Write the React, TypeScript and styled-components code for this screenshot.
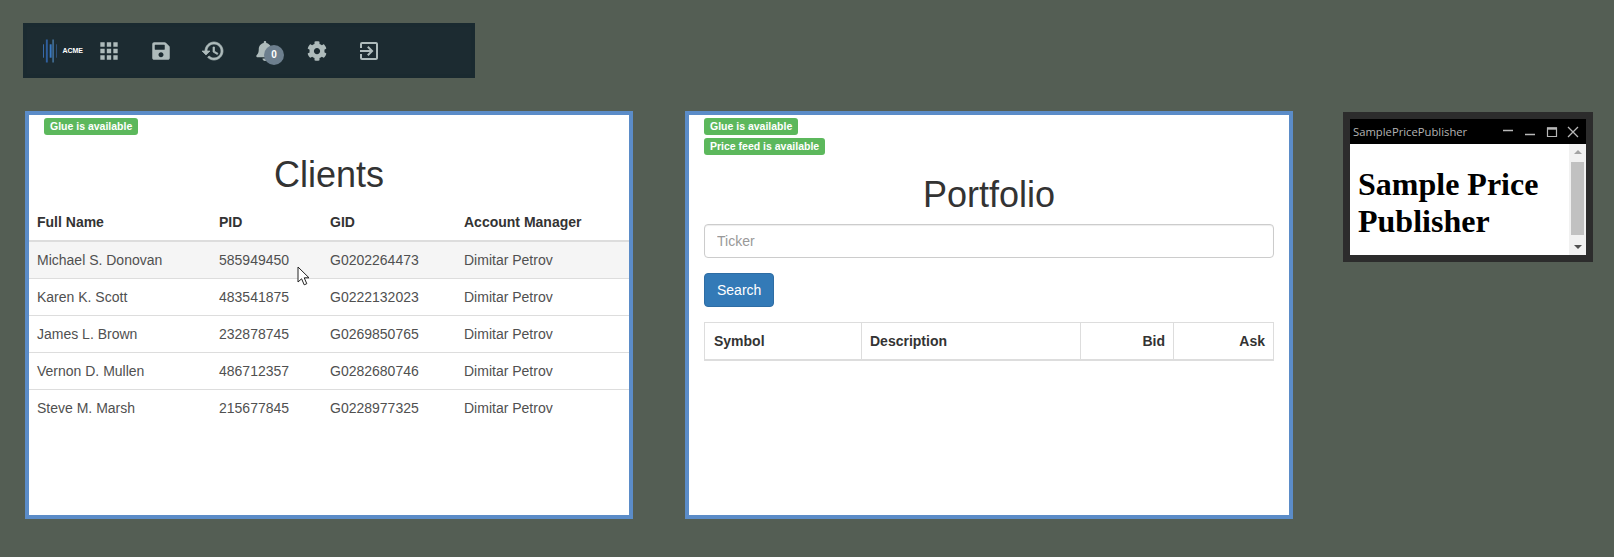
import styled, { createGlobalStyle } from "styled-components";
import { FaBell, FaCog, FaSave } from "react-icons/fa";
import { MdApps, MdOutlineExitToApp } from "react-icons/md";

const GlobalStyle = createGlobalStyle`
  html, body {
    margin: 0;
    padding: 0;
    background: #545e54;
  }
  * {
    box-sizing: border-box;
  }
  body {
    font-family: "Liberation Sans", Arial, sans-serif;
    font-size: 14px;
    line-height: 20px;
    color: #333;
  }
`;

const Page = styled.div`
  width: 1614px;
  height: 557px;
  padding: 23px 0 0 23px;
  overflow: hidden;
`;

const Toolbar = styled.div`
  width: 452px;
  height: 55px;
  display: flex;
  align-items: center;
  background: #1c2b31;
  box-shadow: inset 0 0 0 4px #1a2a30;
`;

const Logo = styled.div`
  width: 60px;
  display: flex;
  align-items: center;
  gap: 5px;
  padding-left: 20px;
  color: #fff;
  font-size: 7px;
  font-weight: bold;
`;

const ToolButton = styled.div`
  position: relative;
  width: 52px;
  height: 55px;
  display: flex;
  align-items: center;
  justify-content: center;
  color: #aebbbb;
`;

const Badge = styled.span`
  position: absolute;
  left: 25px;
  top: 22px;
  width: 20px;
  height: 20px;
  border-radius: 50%;
  background: #6d7f8e;
  color: #fff;
  font-size: 10px;
  font-weight: bold;
  line-height: 20px;
  text-align: center;
`;

const Workspace = styled.div`
  display: flex;
  align-items: flex-start;
  margin: 33px 0 0 2px;
`;

const Panel = styled.div`
  position: relative;
  width: 608px;
  height: 408px;
  margin-right: 52px;
  border: 4px solid #5b8cc8;
  background: #fff;
`;

const Labels = styled.div`
  display: flex;
  flex-direction: column;
  align-items: flex-start;
  gap: 3px;
  padding: 3px 15px 0;
`;

const Label = styled.span`
  height: 17px;
  padding: 0 6px;
  border-radius: 3px;
  background: #5cb85c;
  color: #fff;
  font-size: 10.5px;
  font-weight: bold;
  line-height: 16px;
`;

const Title = styled.h1`
  margin: 19.5px 0 10px;
  font-size: 36px;
  font-weight: 500;
  line-height: 39.6px;
  text-align: center;
`;

const ClientTable = styled.table`
  width: 100%;
  border-collapse: collapse;
  table-layout: fixed;
`;

const Head = styled.th<{ $width?: number }>`
  width: ${(p) => (p.$width ? `${p.$width}px` : "auto")};
  padding: 8px;
  border-bottom: 2px solid #ddd;
  font-weight: bold;
  text-align: left;
`;

const Row = styled.tr<{ $hover?: boolean }>`
  background: ${(p) => (p.$hover ? "#f5f5f5" : "#fff")};
  &:not(:last-child) td {
    border-bottom: 1px solid #ddd;
  }
`;

const Cell = styled.td`
  padding: 8px;
  color: #505050;
`;

const Cursor = styled.svg`
  position: absolute;
  left: 268px;
  top: 151px;
`;

const Form = styled.div`
  padding: 0 15px;
`;

const Input = styled.input`
  display: block;
  width: 100%;
  height: 34px;
  padding: 6px 12px;
  border: 1px solid #ccc;
  border-radius: 4px;
  box-shadow: inset 0 1px 1px rgba(0, 0, 0, 0.075);
  font-family: inherit;
  font-size: 14px;
  &::placeholder {
    color: #999;
  }
`;

const Button = styled.button`
  display: block;
  height: 34px;
  margin: 15px 0;
  padding: 6px 12px;
  border: 1px solid #2e6da4;
  border-radius: 4px;
  background: #337ab7;
  color: #fff;
  font-family: inherit;
  font-size: 14px;
  line-height: 20px;
`;

const PriceTable = styled.table`
  width: 570px;
  border-collapse: separate;
  border-spacing: 0;
  table-layout: fixed;
`;

const PriceHead = styled.th<{ $width: number; $right?: boolean }>`
  width: ${(p) => p.$width}px;
  padding: 8px;
  border: 1px solid #ddd;
  border-left-width: 0;
  border-bottom-width: 2px;
  font-weight: bold;
  text-align: ${(p) => (p.$right ? "right" : "left")};
  &:first-child {
    padding-left: 9px;
    border-left-width: 1px;
  }
`;

const Window = styled.div`
  width: 250px;
  height: 150px;
  margin: 1px 0 0 -2px;
  border: 7px solid #2c2c2c;
  background: #fff;
`;

const TitleBar = styled.div`
  height: 25px;
  display: flex;
  align-items: center;
  justify-content: space-between;
  padding: 0 7px 0 3px;
  background: #000;
  color: #b4b4b4;
  font-family: "Open Sans", sans-serif;
  font-size: 11.25px;
`;

const WindowButtons = styled.svg`
  display: block;
`;

const WindowBody = styled.div`
  height: 111px;
  display: flex;
  overflow: hidden;
`;

const Content = styled.div`
  flex: 1;
  padding-left: 8px;
  overflow: hidden;
`;

const Heading = styled.h1`
  margin: 22px 0;
  color: #000;
  font-family: "Liberation Serif", "Times New Roman", serif;
  font-size: 32px;
  font-weight: bold;
  line-height: 36.8px;
`;

const Scrollbar = styled.div`
  width: 17px;
  display: flex;
  flex-direction: column;
  align-items: center;
  justify-content: space-between;
  padding: 6px 0;
  background: #f1f1f1;
`;

const Arrow = styled.span<{ $down?: boolean }>`
  width: 0;
  height: 0;
  border-left: 4px solid transparent;
  border-right: 4px solid transparent;
  border-bottom: ${(p) => (p.$down ? "0" : "4px solid #a3a3a3")};
  border-top: ${(p) => (p.$down ? "4px solid #505050" : "0")};
`;

const Thumb = styled.div`
  width: 13px;
  height: 73px;
  margin: 0 0 2px;
  background: #c1c1c1;
`;

const clients = [
  ["Michael S. Donovan", "585949450", "G0202264473"],
  ["Karen K. Scott", "483541875", "G0222132023"],
  ["James L. Brown", "232878745", "G0269850765"],
  ["Vernon D. Mullen", "486712357", "G0282680746"],
  ["Steve M. Marsh", "215677845", "G0228977325"],
];

const LogoMark = () => (
  <svg width="15" height="24" viewBox="0 0 15 24">
    <rect x="0" y="5" width="1" height="14" fill="#3a6cae" />
    <rect x="3" y="0" width="2" height="24" fill="#2f5f9e" />
    <rect x="7" y="5" width="2" height="14" fill="#3a7ac4" />
    <rect x="10" y="0" width="1" height="24" fill="#5d9ddc" />
    <rect x="14" y="5" width="1" height="14" fill="#3a6cae" />
  </svg>
);

// material history, drawn here so it can carry the heavier stroke of the toolbar
const HistoryIcon = () => (
  <svg width="24" height="24" viewBox="0 0 24 24" fill="currentColor" stroke="currentColor" strokeWidth="0.7">
    <path d="M13 3c-4.97 0-9 4.03-9 9H1l3.89 3.89.07.14L9 12H6c0-3.87 3.13-7 7-7s7 3.13 7 7-3.13 7-7 7c-1.93 0-3.68-.79-4.94-2.06l-1.42 1.42C8.27 19.99 10.51 21 13 21c4.97 0 9-4.03 9-9s-4.03-9-9-9zm-1 5v5l4.28 2.54.72-1.21-3.5-2.08V8H12z" />
  </svg>
);

const App = () => {
  return (
    <Page>
      <GlobalStyle />
      <Toolbar>
        <Logo>
          <LogoMark />
          ACME
        </Logo>
        <ToolButton>
          <MdApps size={26} />
        </ToolButton>
        <ToolButton>
          <FaSave size={20} />
        </ToolButton>
        <ToolButton>
          <HistoryIcon />
        </ToolButton>
        <ToolButton>
          <FaBell size={20} />
          <Badge>0</Badge>
        </ToolButton>
        <ToolButton>
          <FaCog size={20} />
        </ToolButton>
        <ToolButton>
          <MdOutlineExitToApp size={24} />
        </ToolButton>
      </Toolbar>
      <Workspace>
        <Panel>
          <Labels>
            <Label>Glue is available</Label>
          </Labels>
          <Title>Clients</Title>
          <ClientTable>
            <thead>
              <tr>
                <Head $width={182}>Full Name</Head>
                <Head $width={111}>PID</Head>
                <Head $width={134}>GID</Head>
                <Head>Account Manager</Head>
              </tr>
            </thead>
            <tbody>
              {clients.map((client, index) => (
                <Row key={client[1]} $hover={index === 0}>
                  <Cell>{client[0]}</Cell>
                  <Cell>{client[1]}</Cell>
                  <Cell>{client[2]}</Cell>
                  <Cell>Dimitar Petrov</Cell>
                </Row>
              ))}
            </tbody>
          </ClientTable>
          <Cursor width="13" height="20" viewBox="0 0 13 20">
            <path
              d="M1 1v15l3.6-3.2 2.6 6 2.6-1.1-2.6-5.9H12z"
              fill="#fff"
              stroke="#222"
              strokeWidth="1"
            />
          </Cursor>
        </Panel>
        <Panel>
          <Labels>
            <Label>Glue is available</Label>
            <Label>Price feed is available</Label>
          </Labels>
          <Title>Portfolio</Title>
          <Form>
            <Input placeholder="Ticker" />
            <Button>Search</Button>
            <PriceTable>
              <thead>
                <tr>
                  <PriceHead $width={158}>Symbol</PriceHead>
                  <PriceHead $width={219}>Description</PriceHead>
                  <PriceHead $width={93} $right>
                    Bid
                  </PriceHead>
                  <PriceHead $width={100} $right>
                    Ask
                  </PriceHead>
                </tr>
              </thead>
            </PriceTable>
          </Form>
        </Panel>
        <Window>
          <TitleBar>
            SamplePricePublisher
            <WindowButtons width="76" height="12" viewBox="0 0 76 12" fill="none" stroke="#b8b8b8">
              <path d="M0 4.5h10" strokeWidth="1.5" />
              <path d="M22 8.5h10" strokeWidth="1.5" />
              <path d="M44.5 2h9v8.5h-9z" strokeWidth="1.2" />
              <path d="M44 2.5h10" strokeWidth="2.4" />
              <path d="M65 1l10 10M75 1L65 11" strokeWidth="1.3" />
            </WindowButtons>
          </TitleBar>
          <WindowBody>
            <Content>
              <Heading>Sample Price Publisher</Heading>
            </Content>
            <Scrollbar>
              <Arrow />
              <Thumb />
              <Arrow $down />
            </Scrollbar>
          </WindowBody>
        </Window>
      </Workspace>
    </Page>
  );
};

export default App;
